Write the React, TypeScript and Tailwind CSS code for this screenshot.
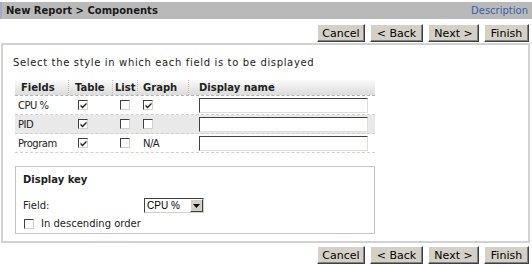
import React from "react";

const font = { fontFamily: '"DejaVu Sans", Verdana, sans-serif' };

function Btn(props: { label: string; w: string }) {
  return (
    <button
      className={`h-[18px] ${props.w} bg-[#d4d0c8] border border-t-white border-l-white border-r-[#404040] border-b-[#404040] shadow-[inset_-1px_-1px_0_#808080] text-[11px] text-black leading-none`}
    >
      {props.label}
    </button>
  );
}

function Buttons() {
  return (
    <div className="flex justify-end gap-[5px] pr-[3px]">
      <Btn label="Cancel" w="w-[48px]" />
      <Btn label="< Back" w="w-[53px]" />
      <Btn label="Next >" w="w-[51px]" />
      <Btn label="Finish" w="w-[45px]" />
    </div>
  );
}

function Check(props: { on?: boolean }) {
  return (
    <span className="inline-flex w-[10px] h-[10px] border border-t-[#404040] border-l-[#404040] border-r-[#d4d0c8] border-b-[#d4d0c8] bg-white items-center justify-center">
      {props.on && (
        <svg width="7" height="7" viewBox="0 0 7 7">
          <path d="M0.5 2.5 L2.5 4.5 L6.5 0.5 L6.5 2.5 L2.5 6.5 L0.5 4.5 Z" fill="#222" />
        </svg>
      )}
    </span>
  );
}

function NameInput() {
  return (
    <div className="h-[15px] w-[169px] bg-white border border-t-[#404040] border-l-[#404040] border-r-[#e0ddd6] border-b-[#e0ddd6]" />
  );
}

const rows = [
  { name: "CPU %", table: true, list: false, graph: "on", bg: "bg-white" },
  { name: "PID", table: true, list: false, graph: "off", bg: "bg-[#e9e9e9]" },
  { name: "Program", table: true, list: false, graph: "na", bg: "bg-white" },
];

export default function App() {
  return (
    <div className="w-[532px] h-[267px] bg-white text-[10px] text-[#222]" style={font}>
      <div className="mt-[2px] h-[17px] flex items-center justify-between bg-[#b9b9b9] border-l-2 border-l-[#a8a8c8] pl-[4px] pr-[4px]">
        <span className="text-[10px] font-bold text-[#1a1a1a]">New Report &gt; Components</span>
        <span className="text-[10px] text-[#3a5fa8]">Description</span>
      </div>
      <div className="pt-[5px]">
        <Buttons />
      </div>
      <div className="mt-[1px] ml-[1px] mr-[2px] h-[200px] border-2 border-[#d2d2d2] pt-[10px]">
        <div className="pl-[10px] text-[10px] tracking-[0.65px]">Select the style in which each field is to be displayed</div>
        <div className="mt-[10px] ml-[12px] w-[360px]">
          <div className="flex h-[16px] items-center font-bold text-[10px] bg-gradient-to-b from-[#fafafa] to-[#dcdcdc] border-b border-dashed border-[#b0b0b0]">
            <div className="w-[54px] pl-[6px] border-r border-dotted border-[#bbb]">Fields</div>
            <div className="w-[44px] pl-[6px] border-r border-dotted border-[#bbb]">Table</div>
            <div className="w-[25px] pl-[2px] border-r border-dotted border-[#bbb]">List</div>
            <div className="w-[51px] pl-[5px] border-r border-dotted border-[#bbb]">Graph</div>
            <div className="flex-1 pl-[10px]">Display name</div>
          </div>
          {rows.map((r) => (
            <div key={r.name} className={`flex h-[19px] items-center ${r.bg} border-b border-dashed border-[#cfcfcf] text-[10px] tracking-[-0.5px]`}>
              <div className="w-[54px] pl-[3px]">{r.name}</div>
              <div className="w-[44px] pl-[9px] flex"><Check on={r.table} /></div>
              <div className="w-[25px] pl-[7px] flex"><Check on={r.list} /></div>
              <div className="w-[51px] pl-[5px] flex">
                {r.graph === "na" ? <span>N/A</span> : <Check on={r.graph === "on"} />}
              </div>
              <div className="flex-1 pl-[10px]"><NameInput /></div>
            </div>
          ))}
        </div>
        <div className="mt-[13px] ml-[12px] w-[360px] h-[68px] border border-[#c4c4c4] pl-[7px] pt-[5px]">
          <div className="font-bold text-[10px]">Display key</div>
          <div className="flex items-center mt-[11px]">
            <span className="w-[121px]">Field:</span>
            <div className="flex items-center h-[15px] w-[60px] border border-t-[#404040] border-l-[#404040] border-r-[#d4d0c8] border-b-[#d4d0c8] bg-white">
              <span className="flex-1 pl-[2px] text-[10px] text-black" style={{ fontFamily: '"Liberation Sans", Arial, sans-serif' }}>CPU %</span>
              <span className="w-[13px] h-[13px] bg-[#d4d0c8] border border-t-white border-l-white border-r-[#404040] border-b-[#404040] flex items-center justify-center">
                <svg width="7" height="4" viewBox="0 0 7 4"><path d="M0 0 H7 L3.5 4 Z" fill="#000" /></svg>
              </span>
            </div>
          </div>
          <div className="flex items-center gap-[7px] mt-[3px] pl-[1px]">
            <Check />
            <span>In descending order</span>
          </div>
        </div>
      </div>
      <div className="pt-[3px]">
        <Buttons />
      </div>
    </div>
  );
}
